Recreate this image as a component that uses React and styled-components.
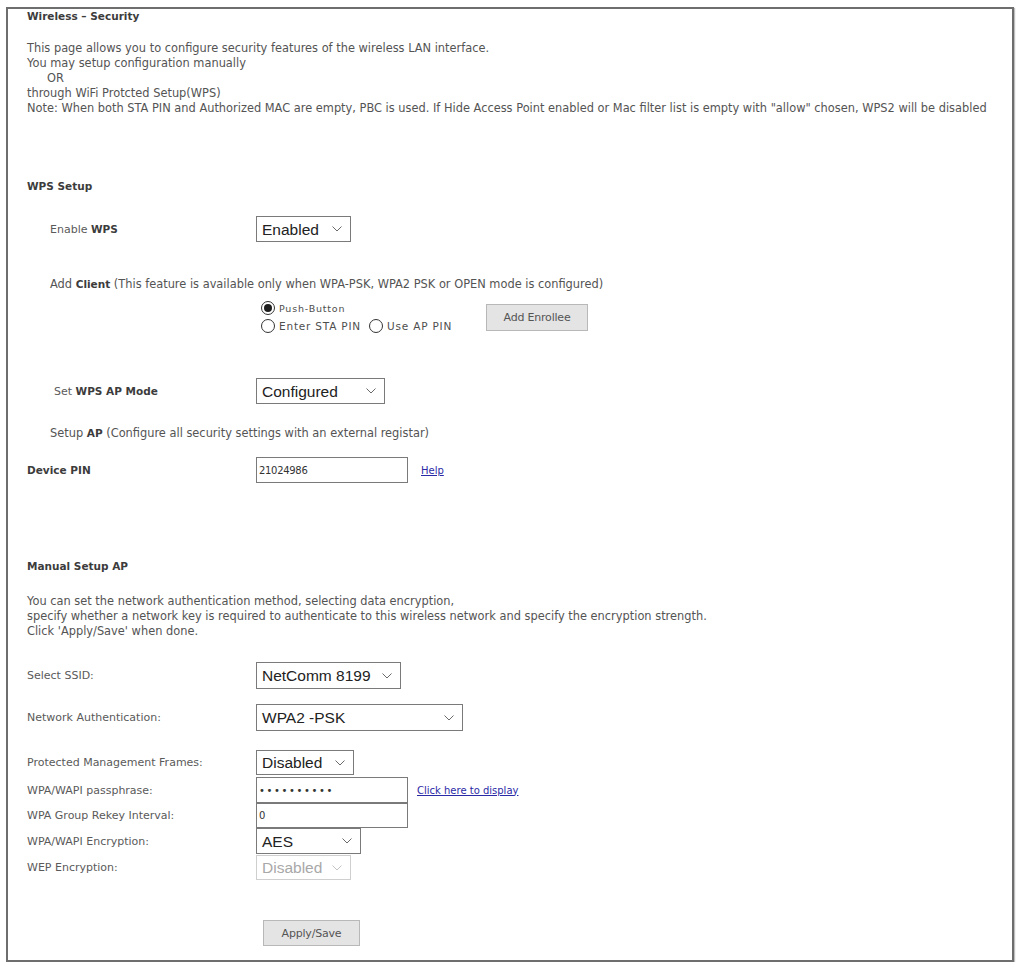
import styled, { createGlobalStyle } from "styled-components"

const GlobalStyle = createGlobalStyle`
  html, body {
    margin: 0;
    padding: 0;
    background: #fff;
  }
  body {
    font-family: "DejaVu Sans", Verdana, sans-serif;
    font-size: 11.4px;
    color: #545454;
  }
`

const Frame = styled.div`
  box-sizing: border-box;
  width: 1008px;
  height: 955px;
  margin: 7px 0 0 6px;
  border: 2px solid #6e6e6e;
  box-shadow: 1px 1px 1px rgba(0, 0, 0, 0.25);
  padding: 0 0 0 19px;
  line-height: 15px;
`

const Heading = styled.div`
  font-weight: bold;
  font-size: 10.5px;
  color: #3c3c3c;
  margin-top: ${(p) => p.$top || 0}px;
`

const Para = styled.div`
  margin-top: ${(p) => p.$top || 0}px;
  padding-left: ${(p) => p.$indent || 0}px;
`

const Or = styled.div`
  padding-left: 20px;
`

const Strong = styled.b`
  color: #3c3c3c;
  font-size: 10.5px;
`

const Row = styled.div`
  display: flex;
  align-items: center;
  height: ${(p) => p.$h || 26}px;
  margin-top: ${(p) => p.$top || 0}px;
`

const Label = styled.div`
  box-sizing: border-box;
  flex-shrink: 0;
  width: 229px;
  padding-left: ${(p) => p.$indent || 0}px;
  font-size: 11px;
  color: #5a5a5a;
`

const SelectBox = styled.div`
  box-sizing: border-box;
  display: flex;
  align-items: center;
  justify-content: space-between;
  width: ${(p) => p.$w}px;
  height: ${(p) => p.$h || 26}px;
  padding: 0 8px 0 5px;
  border: 1px solid ${(p) => (p.$disabled ? "#cfcfcf" : "#7a7a7a")};
  background: #fff;
  font-family: "Liberation Sans", Arial, sans-serif;
  font-size: 15.5px;
  color: ${(p) => (p.$disabled ? "#a8a8a8" : "#222")};
`

const TextField = styled.input`
  box-sizing: border-box;
  width: 152px;
  height: ${(p) => p.$h || 26}px;
  margin: 0;
  padding: 0 2px;
  border: 1px solid #7a7a7a;
  font: 10px "DejaVu Sans", Verdana, sans-serif;
  letter-spacing: ${(p) => (p.$dots ? "1.6px" : "-0.3px")};
  color: #333;
  background: #fff;
  outline: none;
`

const LinkText = styled.a`
  margin-left: ${(p) => p.$gap || 10}px;
  color: #2a2aa6;
  text-decoration: underline;
  font-size: 10px;
  cursor: pointer;
`

const GrayButton = styled.button`
  box-sizing: border-box;
  width: ${(p) => p.$w}px;
  height: ${(p) => p.$h || 27}px;
  margin: 0;
  border: 1px solid #b8b8b8;
  background: #e4e4e4;
  color: #555;
  font: 11px "DejaVu Sans", Verdana, sans-serif;
  letter-spacing: -0.2px;
`

const RadioArea = styled.div`
  display: flex;
  align-items: center;
  margin-top: ${(p) => p.$top || 0}px;
  padding-left: 234px;
`

const RadioStack = styled.div`
  display: flex;
  flex-direction: column;
  width: 225px;
`

const RadioLine = styled.div`
  display: flex;
  align-items: center;
  height: 18px;
`

const RadioItem = styled.label`
  display: inline-flex;
  align-items: center;
  gap: 4px;
  margin-right: 8px;
  font-size: ${(p) => (p.$small ? 9.5 : 10.5)}px;
  letter-spacing: 0.8px;
  color: #4e4e4e;
`

const RadioDot = styled.span`
  box-sizing: border-box;
  display: inline-flex;
  align-items: center;
  justify-content: center;
  width: 14px;
  height: 14px;
  border-radius: 50%;
  border: 1px solid #333;
  background: #fff;
  &::after {
    content: "";
    display: ${(p) => (p.$checked ? "block" : "none")};
    width: 8px;
    height: 8px;
    border-radius: 50%;
    background: #1e1e1e;
  }
`

const SaveArea = styled.div`
  margin-top: ${(p) => p.$top || 0}px;
  padding-left: 236px;
`

function Chevron({ muted }) {
  return (
    <svg width="10" height="6" viewBox="0 0 10 6">
      <polyline
        points="0.5,0.5 5,5 9.5,0.5"
        fill="none"
        stroke={muted ? "#c4c4c4" : "#6a6a6a"}
        strokeWidth="1"
      />
    </svg>
  )
}

function Select({ value, w, h, disabled }) {
  return (
    <SelectBox $w={w} $h={h} $disabled={disabled}>
      <span>{value}</span>
      <Chevron muted={disabled} />
    </SelectBox>
  )
}

export default function App() {
  return (
    <>
      <GlobalStyle />
      <Frame>
        <Heading>Wireless – Security</Heading>

        <Para $top={17}>
          This page allows you to configure security features of the wireless LAN interface.
          <br />
          You may setup configuration manually
          <Or>OR</Or>
          through WiFi Protcted Setup(WPS)
          <br />
          Note: When both STA PIN and Authorized MAC are empty, PBC is used. If Hide Access Point
          enabled or Mac filter list is empty with "allow" chosen, WPS2 will be disabled
        </Para>

        <Heading $top={63}>WPS Setup</Heading>

        <Row $top={22}>
          <Label $indent={23}>
            Enable <Strong>WPS</Strong>
          </Label>
          <Select value="Enabled" w={95} />
        </Row>

        <Para $top={35} $indent={23}>
          Add <Strong>Client</Strong> (This feature is available only when WPA-PSK, WPA2 PSK or OPEN
          mode is configured)
        </Para>

        <RadioArea $top={7}>
          <RadioStack>
            <RadioLine>
              <RadioItem $small>
                <RadioDot $checked />
                Push-Button
              </RadioItem>
            </RadioLine>
            <RadioLine>
              <RadioItem>
                <RadioDot />
                Enter STA PIN
              </RadioItem>
              <RadioItem>
                <RadioDot />
                Use AP PIN
              </RadioItem>
            </RadioLine>
          </RadioStack>
          <GrayButton $w={102}>Add Enrollee</GrayButton>
        </RadioArea>

        <Row $top={43}>
          <Label $indent={27}>
            Set <Strong>WPS AP Mode</Strong>
          </Label>
          <Select value="Configured" w={129} />
        </Row>

        <Para $top={22} $indent={23}>
          Setup <Strong>AP</Strong> (Configure all security settings with an external registar)
        </Para>

        <Row $top={16}>
          <Label>
            <Strong>Device PIN</Strong>
          </Label>
          <TextField readOnly value="21024986" />
          <LinkText $gap={13}>Help</LinkText>
        </Row>

        <Heading $top={76}>Manual Setup AP</Heading>

        <Para $top={20}>
          You can set the network authentication method, selecting data encryption,
          <br />
          specify whether a network key is required to authenticate to this wireless network and
          specify the encryption strength.
          <br />
          Click 'Apply/Save' when done.
        </Para>

        <Row $top={23} $h={27}>
          <Label>Select SSID:</Label>
          <Select value="NetComm 8199" w={145} h={27} />
        </Row>

        <Row $top={15} $h={27}>
          <Label>Network Authentication:</Label>
          <Select value="WPA2 -PSK" w={207} h={27} />
        </Row>

        <Row $top={19} $h={25}>
          <Label>Protected Management Frames:</Label>
          <Select value="Disabled" w={98} h={25} />
        </Row>

        <Row $top={2}>
          <Label>WPA/WAPI passphrase:</Label>
          <TextField type="password" readOnly value="1234567890" $dots />
          <LinkText $gap={9}>Click here to display</LinkText>
        </Row>

        <Row $h={25}>
          <Label>WPA Group Rekey Interval:</Label>
          <TextField readOnly value="0" $h={25} />
        </Row>

        <Row>
          <Label>WPA/WAPI Encryption:</Label>
          <Select value="AES" w={105} />
        </Row>

        <Row $top={1} $h={25}>
          <Label>WEP Encryption:</Label>
          <Select value="Disabled" w={95} h={25} disabled />
        </Row>

        <SaveArea $top={40}>
          <GrayButton $w={97} $h={26}>
            Apply/Save
          </GrayButton>
        </SaveArea>
      </Frame>
    </>
  )
}
